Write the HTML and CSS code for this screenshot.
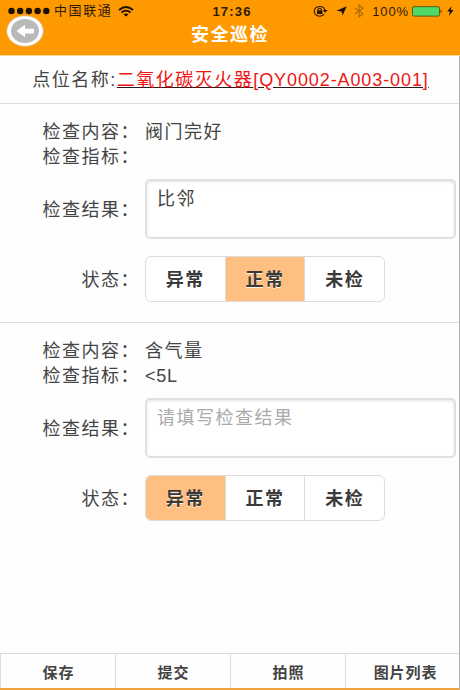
FILE: index.html
```html
<!DOCTYPE html>
<html lang="zh-CN">

<head>
    <meta charset="UTF-8">
    <meta name="viewport" content="width=device-width, initial-scale=1.0">
    <title>安全巡检</title>
    <link rel="stylesheet" href="styles.css">
</head>

<body>
    <div class="container">
        <div class="header">
            <div class="status-bar">
                <div class="status-left">
                    <svg class="signal" width="42" height="8" viewBox="0 0 42 8">
                        <circle cx="3.5" cy="4" r="3.2" />
                        <circle cx="12.2" cy="4" r="3.2" />
                        <circle cx="20.9" cy="4" r="3.2" />
                        <circle cx="29.6" cy="4" r="3.2" />
                        <circle cx="38.3" cy="4" r="3.2" />
                    </svg>
                    <span class="carrier">中国联通</span>
                    <svg class="wifi" width="16" height="11" viewBox="0 0 16 11">
                        <path d="M1 4 Q8 -2 15 4" />
                        <path d="M3.5 6.5 Q8 2.7 12.5 6.5" />
                        <path class="fill" d="M5.6 8.4 Q8 6.5 10.4 8.4 L8 10.6 Z" />
                    </svg>
                </div>
                <span class="time">17:36</span>
                <div class="status-right">
                    <svg class="lock" width="15" height="12" viewBox="0 0 15 12">
                        <path d="M11.2 9.2 A5.5 4.9 0 1 1 12 5" />
                        <path class="fill" d="M9.8 5 H14.6 L12.2 7.8 Z" />
                        <rect class="fill" x="4" y="5.4" width="5.4" height="3.6" />
                        <path d="M5.1 5.5 V4.3 Q6.7 2.3 8.3 4.3 V5.5" />
                    </svg>
                    <svg class="arrow" width="11" height="10" viewBox="0 0 11 10">
                        <path d="M10.7 0.3 L6.6 9.6 L5.6 5.4 L0.5 4.8 Z" />
                    </svg>
                    <svg class="bluetooth" width="10" height="14" viewBox="0 0 10 14">
                        <path d="M0.8 4 L9 9.8 L5 13 V1 L9 4.2 L0.8 10" />
                    </svg>
                    <span class="percent">100%</span>
                    <svg class="battery" width="31" height="11" viewBox="0 0 31 11">
                        <rect x="0.5" y="0.7" width="27" height="9.4" rx="1.5" />
                        <path d="M28.6 3.5 Q30.6 5.4 28.6 7.3 Z" />
                    </svg>
                    <svg class="bolt" width="7" height="10" viewBox="0 0 7 10">
                        <path d="M4.6 0 L0.3 5.6 H3 L1.9 10 L6.7 4 H3.8 Z" />
                    </svg>
                </div>
            </div>
            <div class="title">安全巡检</div>
            <a href="#" class="back-btn">
                <svg width="38" height="32" viewBox="0 0 38 32">
                    <ellipse class="ring" cx="19" cy="16" rx="18.3" ry="15.3" />
                    <ellipse class="disc" cx="19" cy="16" rx="14" ry="12" />
                    <path d="M10.5 16 L19 9.8 V13.7 H28 V18.4 H19 V22.2 Z" />
                </svg>
            </a>
        </div>

        <div class="point">
            <span class="point-label">点位名称:</span><a href="#" class="point-link">二氧化碳灭火器<span class="code">[QY0002-A003-001]</span></a>
        </div>

        <div class="section">
            <label>检查内容：</label>
            <div class="value">阀门完好</div>
            <label>检查指标：</label>
            <div class="value"></div>
            <label class="result-label">检查结果：</label>
            <textarea class="input-box" placeholder="请填写检查结果">比邻</textarea>
            <label class="state-label">状态：</label>
            <div class="state">
                <div class="option">异常</div>
                <div class="option active">正常</div>
                <div class="option">未检</div>
            </div>
        </div>

        <div class="section last">
            <label>检查内容：</label>
            <div class="value">含气量</div>
            <label>检查指标：</label>
            <div class="value limit">&lt;5L</div>
            <label class="result-label">检查结果：</label>
            <textarea class="input-box" placeholder="请填写检查结果"></textarea>
            <label class="state-label">状态：</label>
            <div class="state">
                <div class="option active">异常</div>
                <div class="option">正常</div>
                <div class="option">未检</div>
            </div>
        </div>

        <div class="footer">
            <div class="tab">保存</div>
            <div class="tab">提交</div>
            <div class="tab">拍照</div>
            <div class="tab">图片列表</div>
        </div>
    </div>
</body>

</html>
```

FILE: styles.css
```css
* {
    margin: 0;
    padding: 0;
    box-sizing: border-box;
    font-family: "Liberation Sans", "Noto Sans CJK SC", sans-serif;
}

body {
    width: 460px;
    height: 690px;
    background: #fefefe;
    color: #444;
    overflow: hidden;
}

.container {
    height: 690px;
    display: flex;
    flex-direction: column;
    border-right: 1px solid #b5b5b5;
}

.header {
    position: relative;
    height: 56px;
    flex-shrink: 0;
    margin-right: -1px;
    background: #ff9900;
    border-bottom: 1px solid #ffd79a;
}

.status-bar {
    display: grid;
    grid-template-columns: 1fr auto 1fr;
    align-items: center;
    height: 22px;
    padding: 0 6px 0 8px;
    color: #2b1b05;
}

.status-left,
.status-right {
    display: flex;
    align-items: center;
}

.status-right {
    justify-content: flex-end;
}

.signal,
.arrow,
.bolt {
    fill: #1a1000;
}

.carrier {
    margin-left: 4px;
    font-size: 13px;
    letter-spacing: 1.6px;
    line-height: 22px;
}

.wifi {
    margin-left: 6px;
    fill: none;
    stroke: #1a1000;
    stroke-width: 1.8;
}

.wifi .fill,
.lock .fill {
    fill: #1a1000;
    stroke: none;
}

.time {
    padding-left: 2px;
    font-size: 13px;
    font-weight: bold;
    letter-spacing: 1.2px;
}

.lock {
    fill: none;
    stroke: #2b1b05;
    stroke-width: 1.1;
}

.arrow {
    margin-left: 8px;
}

.bluetooth {
    margin-left: 7px;
    fill: none;
    stroke: #a9680b;
    stroke-width: 1.1;
}

.percent {
    margin-left: 8px;
    font-size: 13px;
    letter-spacing: 0.9px;
}

.battery {
    margin-left: 3px;
    fill: #2b1b05;
}

.battery rect {
    fill: #4cd964;
    stroke: #5a5a14;
}

.bolt {
    margin-left: 4px;
}

.title {
    padding-top: 1px;
    font-size: 18px;
    font-weight: bold;
    letter-spacing: 1.5px;
    line-height: 24px;
    text-align: center;
    color: #fff;
}

/* overlaps both the status bar and the title row */
.back-btn {
    position: absolute;
    top: 15px;
    left: 6px;
    height: 32px;
}

.back-btn svg {
    display: block;
    fill: #fff;
}

.back-btn .ring {
    stroke: #d9b98a;
    stroke-width: 0.8;
}

.back-btn .disc {
    fill: #b9b9b9;
}

.point {
    height: 48px;
    flex-shrink: 0;
    padding: 1px 0 0 2px;
    line-height: 46px;
    font-size: 18px;
    letter-spacing: 1.5px;
    text-align: center;
    white-space: nowrap;
    border-bottom: 1px solid #dcdcdc;
}

.point-link {
    color: #f01414;
    text-decoration: underline;
    text-decoration-color: #2a1a1a;
}

.code {
    letter-spacing: 0.9px;
}

.section {
    display: grid;
    grid-template-columns: 140px 311px;
    column-gap: 5px;
    grid-template-rows: 25px 25px 70px 63px;
    align-items: center;
    flex-shrink: 0;
    height: 219px;
    padding-top: 15px;
    font-size: 18px;
    letter-spacing: 1.5px;
    line-height: 25px;
    border-bottom: 1px solid #dcdcdc;
}

.section.last {
    border-bottom: none;
}

.section label,
.section .value {
    height: 25px;
    padding-top: 1px;
}

.section label {
    text-align: right;
}

.section .limit {
    letter-spacing: 0.8px;
}

.section .result-label,
.section .input-box {
    margin-top: 10px;
}

.section .state-label,
.section .state {
    margin-top: 17px;
}

.input-box {
    display: block;
    width: 311px;
    height: 60px;
    padding: 6px 10px;
    font-size: 18px;
    letter-spacing: 1.5px;
    line-height: 25px;
    color: #444;
    background: #fff;
    border: 2px solid #e0e0e0;
    border-radius: 5px;
    box-shadow: inset 0 1px 3px #e4e4e4;
    resize: none;
    outline: none;
    overflow: hidden;
}

.input-box::placeholder {
    color: #aaa;
}

.state {
    display: flex;
    width: 240px;
    height: 46px;
    border: 1px solid #dcdcdc;
    border-radius: 6px;
    background: #fff;
    overflow: hidden;
}

.option {
    flex: 1;
    padding-top: 1px;
    line-height: 44px;
    text-align: center;
    font-weight: bold;
    color: #3a3a3a;
}

.option + .option {
    border-left: 1px solid #dcdcdc;
}

.option.active {
    background: #ffbf80;
    text-shadow: 0 1px 0 #fff3e0;
}

.footer {
    display: grid;
    grid-template-columns: repeat(4, 115px);
    height: 37px;
    margin-top: auto;
    border-top: 1px solid #d8d8d8;
    border-bottom: 2px solid #efa23c;
}

.tab {
    padding: 1px 0 0 1px;
    height: 34px;
    line-height: 35px;
    font-size: 15px;
    font-weight: bold;
    letter-spacing: 0.9px;
    text-align: center;
    color: #444;
    border-left: 1px solid #dcdcdc;
}

.tab:last-child {
    padding-left: 5px;
}
```
